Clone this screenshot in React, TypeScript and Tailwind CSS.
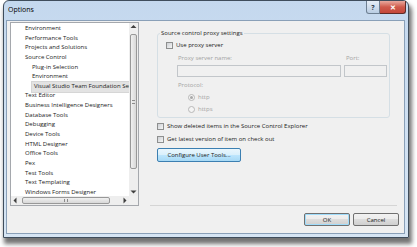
import React from "react";

const treeItems: { label: string; level: number; selected?: boolean }[] = [
  { label: "Environment", level: 0 },
  { label: "Performance Tools", level: 0 },
  { label: "Projects and Solutions", level: 0 },
  { label: "Source Control", level: 0 },
  { label: "Plug-in Selection", level: 1 },
  { label: "Environment", level: 1 },
  { label: "Visual Studio Team Foundation Server", level: 1, selected: true },
  { label: "Text Editor", level: 0 },
  { label: "Business Intelligence Designers", level: 0 },
  { label: "Database Tools", level: 0 },
  { label: "Debugging", level: 0 },
  { label: "Device Tools", level: 0 },
  { label: "HTML Designer", level: 0 },
  { label: "Office Tools", level: 0 },
  { label: "Pex", level: 0 },
  { label: "Test Tools", level: 0 },
  { label: "Text Templating", level: 0 },
  { label: "Windows Forms Designer", level: 0 },
];

function Arrow({ dir }: { dir: "up" | "down" | "left" | "right" }) {
  const pts = {
    up: "1.5,5 4.5,2 7.5,5",
    down: "1.5,3.5 4.5,6.5 7.5,3.5",
    left: "5.5,1.5 2.5,4.5 5.5,7.5",
    right: "3.5,1.5 6.5,4.5 3.5,7.5",
  }[dir];
  return (
    <svg width="9" height="9" viewBox="0 0 9 9" className="shrink-0">
      <polygon points={pts} fill="#404040" />
    </svg>
  );
}

function Check() {
  return (
    <span className="h-[7px] w-[7px] shrink-0 border border-[#8e8f8f] bg-linear-to-br from-[#cdd0d4] to-[#f6f6f6]" />
  );
}

function Radio({ checked }: { checked?: boolean }) {
  return (
    <span className="flex h-[7px] w-[7px] shrink-0 items-center justify-center rounded-full border border-[#b8b8b8] bg-[#f4f4f4]">
      {checked && <span className="h-[3px] w-[3px] rounded-full bg-[#a8a8a8]" />}
    </span>
  );
}

const btnGrey =
  "rounded-[2px] border border-[#707070] bg-[linear-gradient(#f2f2f2_0%,#ebebeb_50%,#dddddd_50%,#cfcfcf_100%)]";

export default function App() {
  return (
    <div className="h-[247px] w-[417px] overflow-hidden bg-white pl-[3px] font-['Open_Sans',sans-serif] text-[6px] text-[#1b1b1b]">
      <div className="flex h-[238px] w-[406px] flex-col rounded-t-[6px] border border-[#3f4d5c] bg-linear-to-b from-[#c4d8ee] via-[#cfe0f2] to-[#d6e5f4] shadow-[2px_5px_4px_1px_rgba(0,0,0,0.55)]">
        {/* title bar */}
        <div className="flex h-[19px] shrink-0 items-start justify-between">
          <span className="pl-[4px] pt-[5px] text-[7px] leading-[8px] text-black">Options</span>
          <div className="mr-[2px] flex">
            <span className="flex h-[13px] w-[14px] items-center justify-center rounded-bl-[3px] border border-t-0 border-[#6d7f92] bg-linear-to-b from-[#e6eef7] to-[#b9cde3] text-[7px] font-bold leading-none text-[#28384a]">
              ?
            </span>
            <span className="flex h-[13px] w-[26px] items-center justify-center rounded-br-[3px] border border-t-0 border-l-0 border-[#5e2b27] bg-linear-to-b from-[#e8a99f] via-[#cf5a4c] to-[#c4473a] text-[7px] font-bold leading-none text-white">
              ✕
            </span>
          </div>
        </div>

        {/* client area */}
        <div className="mb-[3px] ml-[2px] mr-[3px] flex flex-1 flex-col border border-[#8aa0b8] bg-[#f0f0f0]">
          <div className="flex h-[185px] shrink-0 gap-[11px] pl-[3px]">
            {/* tree */}
            <div className="mt-[1px] flex h-[184px] w-[129px] shrink-0 flex-col border border-[#a5a8ad] bg-white">
              <div className="flex min-h-0 flex-1">
                <div className="min-w-0 flex-1 overflow-hidden pt-[1px]">
                  {treeItems.map((t, i) => (
                    <div
                      key={i}
                      className={`flex h-[9.65px] items-center whitespace-nowrap leading-[9.65px] ${
                        t.level === 1 ? "pl-[21px]" : "pl-[14px]"
                      }`}
                    >
                      <span className={t.selected ? "bg-[#e3e3e3] pl-[2px] pr-[10px] outline outline-[#d6d6d6]" : ""}>
                        {t.label}
                      </span>
                    </div>
                  ))}
                </div>
                <div className="flex w-[9px] shrink-0 flex-col bg-[#eeeeee]">
                  <Arrow dir="up" />
                  <div className="mx-[1px] mt-[2px] flex h-[135px] items-center justify-center rounded-[2px] border border-[#989898] bg-linear-to-r from-[#f0f0f0] to-[#d8d8d8]">
                    <span className="h-[4px] w-[3px] border-y border-[#8c8c8c]" />
                  </div>
                  <div className="flex-1" />
                  <Arrow dir="down" />
                </div>
              </div>
              <div className="flex h-[9px] shrink-0 bg-[#eeeeee]">
                <Arrow dir="left" />
                <div className="my-[1px] ml-[2px] flex w-[88px] items-center justify-center rounded-[2px] border border-[#989898] bg-linear-to-b from-[#f0f0f0] to-[#d8d8d8]">
                  <span className="h-[3px] w-[4px] border-x border-[#8c8c8c]" />
                </div>
                <div className="flex-1" />
                <Arrow dir="right" />
                <div className="w-[9px] bg-[#f0f0f0]" />
              </div>
            </div>

            {/* right panel */}
            <div className="flex w-[247px] shrink-0 flex-col border-b border-[#d5d5d5] px-[7px]">
              <fieldset className="mt-[8px] h-[89px] rounded-[3px] border border-[#d5dfe5]">
                <legend className="ml-[2px] px-[1px] leading-[8px]">Source control proxy settings</legend>
                <div className="mt-[4px] flex h-[8px] items-center gap-[3px] pl-[8px]">
                  <Check />
                  <span>Use proxy server</span>
                </div>
                <div className="mt-[5px] grid grid-cols-[164px_43px] gap-x-[3px] pl-[19px] text-[#a3a3a3]">
                  <span className="pl-[1px] leading-[8px]">Proxy server name:</span>
                  <span className="pl-[2px] leading-[8px]">Port:</span>
                  <span className="mt-[3px] h-[12px] border border-[#c2c6ca] bg-[#f0f0f0]" />
                  <span className="mt-[3px] h-[12px] border border-[#c2c6ca] bg-[#f0f0f0]" />
                </div>
                <div className="mt-[4px] pl-[20px] leading-[8px] text-[#a3a3a3]">Protocol:</div>
                <div className="mt-[4px] flex h-[8px] items-center gap-[3px] pl-[30px] text-[#a3a3a3]">
                  <Radio checked />
                  <span>http</span>
                </div>
                <div className="mt-[4px] flex h-[8px] items-center gap-[3px] pl-[30px] text-[#a3a3a3]">
                  <Radio />
                  <span>https</span>
                </div>
              </fieldset>
              <div className="mt-[4px] flex h-[8px] items-center gap-[3px]">
                <Check />
                <span>Show deleted items in the Source Control Explorer</span>
              </div>
              <div className="mt-[5px] flex h-[8px] items-center gap-[3px]">
                <Check />
                <span>Get latest version of item on check out</span>
              </div>
              <button className="mt-[5px] flex h-[14px] w-[84px] items-center justify-center rounded-[2px] border border-[#3c7fb1] bg-[linear-gradient(#eaf6fd_0%,#d9f0fc_50%,#bee6fd_50%,#a7d9f5_100%)] leading-none">
                Configure User Tools...
              </button>
            </div>
          </div>

          {/* bottom buttons */}
          <div className="flex flex-1 items-start justify-end gap-[3px] pr-[5px] pt-[7px]">
            <button className={`flex h-[13px] w-[46px] items-center justify-center leading-none ${btnGrey} border-[#3c7fb1] shadow-[inset_0_0_0_1px_#9fdcfb]`}>
              OK
            </button>
            <button className={`flex h-[13px] w-[46px] items-center justify-center leading-none ${btnGrey}`}>
              Cancel
            </button>
          </div>
        </div>
      </div>
    </div>
  );
}
